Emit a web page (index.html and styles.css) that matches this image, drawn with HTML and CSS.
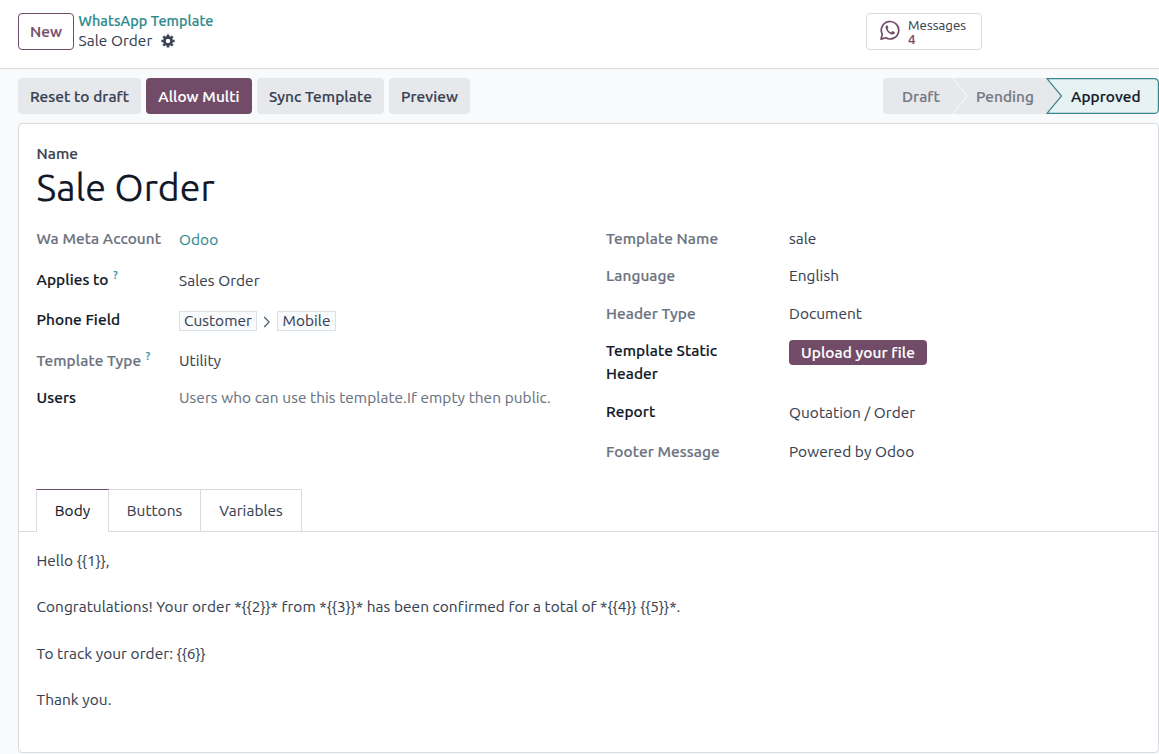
FILE: index.html
```html
<!DOCTYPE html>
<html lang="en">
<head>
<meta charset="utf-8">
<title>Sale Order - WhatsApp Template</title>
<link rel="stylesheet" href="styles.css">
</head>
<body>
<header class="control-panel">
  <button class="btn btn-outline">New</button>
  <div class="breadcrumb">
    <a class="crumb-link" href="#">WhatsApp Template</a>
    <div class="crumb-current"><span>Sale Order</span>
      <svg class="gear" viewBox="0 0 14 14" width="14" height="14" fill="none" stroke="#374151"><circle cx="7" cy="7" r="3.600" stroke-width="2.700"/><path stroke-width="2.600" d="M7 .4v2M7 11.600v2M.4 7h2M11.600 7h2M2.300 2.300l1.400 1.400M10.300 10.300l1.400 1.400M2.300 11.700l1.400-1.400M10.300 3.700l1.400-1.400"/></svg>
    </div>
  </div>
  <button class="stat-button">
    <svg class="whatsapp" viewBox="0 0 20 20" width="20" height="20" fill="none" stroke="#714b67" stroke-width="1.7"><path d="M1 19.100l1.300-4.800A8.700 8.700 0 1 1 5.700 17.800z" stroke-linejoin="round"/><path d="M7 5.200c-.9.300-1.500 1.200-1.400 2.300.4 3.400 3.300 6.500 6.700 6.900 1.200.1 2.300-.6 2.500-1.700l-.1-.6-2.300-1.100-1.300 1.400C9.400 11.700 8.200 10.500 7.500 8.900l.9-1.200-.9-2.300z" fill="#714b67" stroke="none"/></svg>
    <span class="stat-text"><span class="stat-label">Messages</span><span class="stat-value">4</span></span>
  </button>
</header>
<main class="form-view">
  <div class="statusbar">
    <div class="actions">
      <button class="btn btn-light w-reset">Reset to draft</button>
      <button class="btn btn-primary w-multi">Allow Multi</button>
      <button class="btn btn-light w-sync">Sync Template</button>
      <button class="btn btn-light w-preview">Preview</button>
    </div>
    <div class="stages">
      <svg class="stage-shape" width="276" height="36" viewBox="0 0 276 36">
        <path fill="#e7e8ec" d="M4 0h176v36H4a4 4 0 0 1-4-4V4a4 4 0 0 1 4-4z"/>
        <path fill="none" stroke="#f9fafb" d="M69.500 0l14.500 18-14.500 18"/>
        <path fill="#e6f2f3" stroke="#3b868b" stroke-width="1.200" d="M164 .6h107.400a4 4 0 0 1 4 4v26.800a4 4 0 0 1-4 4H164L178.500 18z"/>
      </svg>
      <span class="stage s-draft">Draft</span>
      <span class="stage s-pending">Pending</span>
      <span class="stage s-approved">Approved</span>
    </div>
  </div>
  <section class="sheet">
    <div class="title">
      <label class="title-label">Name</label>
      <h1>Sale Order</h1>
    </div>
    <div class="groups">
      <dl class="group group-left">
        <dt class="muted">Wa Meta Account</dt><dd class="low"><a href="#">Odoo</a></dd>
        <dt>Applies to <sup>?</sup></dt><dd class="low">Sales Order</dd>
        <dt>Phone Field</dt><dd class="low path"><span class="chip c-customer">Customer</span><svg width="8" height="12" viewBox="0 0 8 12" fill="none" stroke="#4b5563" stroke-width="1.100"><path d="M1.200 1l5 5-5 5"/></svg><span class="chip c-mobile">Mobile</span></dd>
        <dt class="muted">Template Type <sup>?</sup></dt><dd>Utility</dd>
        <dt>Users</dt><dd class="placeholder">Users who can use this template.If empty then public.</dd>
      </dl>
      <dl class="group group-right">
        <dt class="muted">Template Name</dt><dd>sale</dd>
        <dt class="muted">Language</dt><dd>English</dd>
        <dt class="muted">Header Type</dt><dd>Document</dd>
        <dt>Template Static<br>Header</dt><dd><button class="btn-upload">Upload your file</button></dd>
        <dt>Report</dt><dd class="low">Quotation / Order</dd>
        <dt class="muted">Footer Message</dt><dd>Powered by Odoo</dd>
      </dl>
    </div>
    <nav class="tabs">
      <a class="tab active" href="#">Body</a>
      <a class="tab t-buttons" href="#">Buttons</a>
      <a class="tab t-variables" href="#">Variables</a>
    </nav>
    <div class="message">
      <p>Hello {{1}},</p>
      <p>Congratulations! Your order *{{2}}* from *{{3}}* has been confirmed for a total of *{{4}} {{5}}*.</p>
      <p>To track your order: {{6}}</p>
      <p>Thank you.</p>
    </div>
  </section>
</main>
</body>
</html>
```
FILE: styles.css
```css
* { box-sizing: border-box; }
body { margin: 0; height: 754px; overflow: hidden; background: #f9fafb; color: #374151; font: 400 15.4px/23px Ubuntu, "Noto Sans", sans-serif; letter-spacing: 0.07px; -webkit-text-stroke: 0.1px; }
a { color: #017e84; text-decoration: none; }
button { font: inherit; letter-spacing: inherit; color: inherit; padding: 0; cursor: pointer; white-space: nowrap; }
.control-panel { display: flex; align-items: flex-start; height: 69px; padding: 13px 177px 0 18px; background: #fff; border-bottom: 1px solid #d8dadd; }
.btn, .crumb-link, .stages, .title-label, dt, .btn-upload, .stat-value { font-weight: 500; -webkit-text-stroke: 0.18px; }
.btn { height: 36px; border: 1px solid transparent; border-radius: 4px; }
.btn-outline { width: 56px; height: 37px; border-color: #714b67; background: #fff; color: #714b67; }
.btn-light { background: #e7e8ec; }
.btn-primary { background: #714b67; color: #fff; }
.w-reset { width: 123px; }
.w-multi { width: 106px; }
.w-sync { width: 127px; }
.w-preview { width: 81px; }
.breadcrumb { margin: -2px 0 0 4.500px; line-height: 20px; white-space: nowrap; }
.crumb-link { display: block; font-size: 14.4px; color: #2f8a8f; }
.crumb-current { display: flex; align-items: center; gap: 9px; }
.gear { margin-top: -1px; }
.stat-button { display: flex; align-items: center; width: 116px; height: 37px; margin-left: auto; padding-left: 13px; gap: 8px; background: #fff; border: 1px solid #d8dadd; border-radius: 4px; }
.whatsapp { margin-top: -3px; }
.stat-text { display: flex; flex-direction: column; align-items: flex-start; font-size: 13.2px; line-height: 14px; }
.stat-value { color: #714b67; }
.statusbar { display: flex; justify-content: space-between; height: 54px; padding: 9px 0 0 18px; }
.actions { display: flex; gap: 5px; }
.stages { position: relative; display: flex; width: 276px; height: 36px; line-height: 37px; }
.stage-shape { position: absolute; inset: 0; }
.stage { position: relative; color: #737985; white-space: nowrap; }
.s-draft { width: 75px; padding-left: 19px; }
.s-pending { width: 113px; padding-left: 18px; }
.s-approved { color: #111827; }
.sheet { width: 1141px; height: 630px; margin-left: 18px; background: #fff; border: 1px solid #d8dadd; border-radius: 4px; }
.title { height: 103px; padding: 18px 0 0 17.500px; }
.title-label { display: block; }
h1 { margin: -1px 0 0; font-weight: 400; font-size: 37.5px; line-height: 46px; letter-spacing: 0; color: #111827; -webkit-text-stroke: 0.15px; }
.groups { display: flex; height: 262px; padding-left: 17px; }
.group { display: grid; margin: 0; align-content: start; white-space: nowrap; }
.group-left { width: 570px; grid-template-columns: 143px 1fr; grid-template-rows: 41px 40px 41px 37px 37px; }
.group-left dt { padding-left: 0.500px; }
.group-right { grid-template-columns: 183px 1fr; grid-template-rows: 37px 38px 37px 61px 40px 37px; }
dt { color: #111827; }
dt.muted { color: #6b7280; }
dd { margin: 0; }
dd.low { padding-top: 1px; }
dd a { color: #2f8a8f; }
dd.placeholder { color: #6b7280; }
sup { margin-left: 1px; font-size: 10.5px; line-height: 0; color: #2f8fa8; vertical-align: 6px; }
.path { display: flex; align-items: flex-start; }
.path svg { margin: 7px 6px 0; }
.chip { height: 20px; line-height: 18px; margin-top: 1.500px; text-align: center; background: #f9fafb; border: 1px solid #d8e0e8; }
.c-customer { width: 78px; }
.c-mobile { width: 59px; }
.btn-upload { display: block; width: 138px; height: 25px; margin-top: 1px; border: 0; border-radius: 4px; background: #714b67; color: #fff; }
.tabs { display: flex; height: 43px; padding-left: 17px; border-bottom: 1px solid #d8dadd; }
.tab { height: 42px; line-height: 42px; text-align: center; color: #374151; border: 1px solid #d8dadd; border-left: 0; border-bottom: 0; }
.tab.active { width: 73px; height: 43px; background: #fff; color: #111827; border-left: 1px solid #d8dadd; border-top-color: #714b67; }
.t-buttons { width: 92px; }
.t-variables { width: 101px; }
.message { padding: 17px 0 0 17.500px; line-height: 23px; }
.message p { margin: 0 0 23.300px; }
```
